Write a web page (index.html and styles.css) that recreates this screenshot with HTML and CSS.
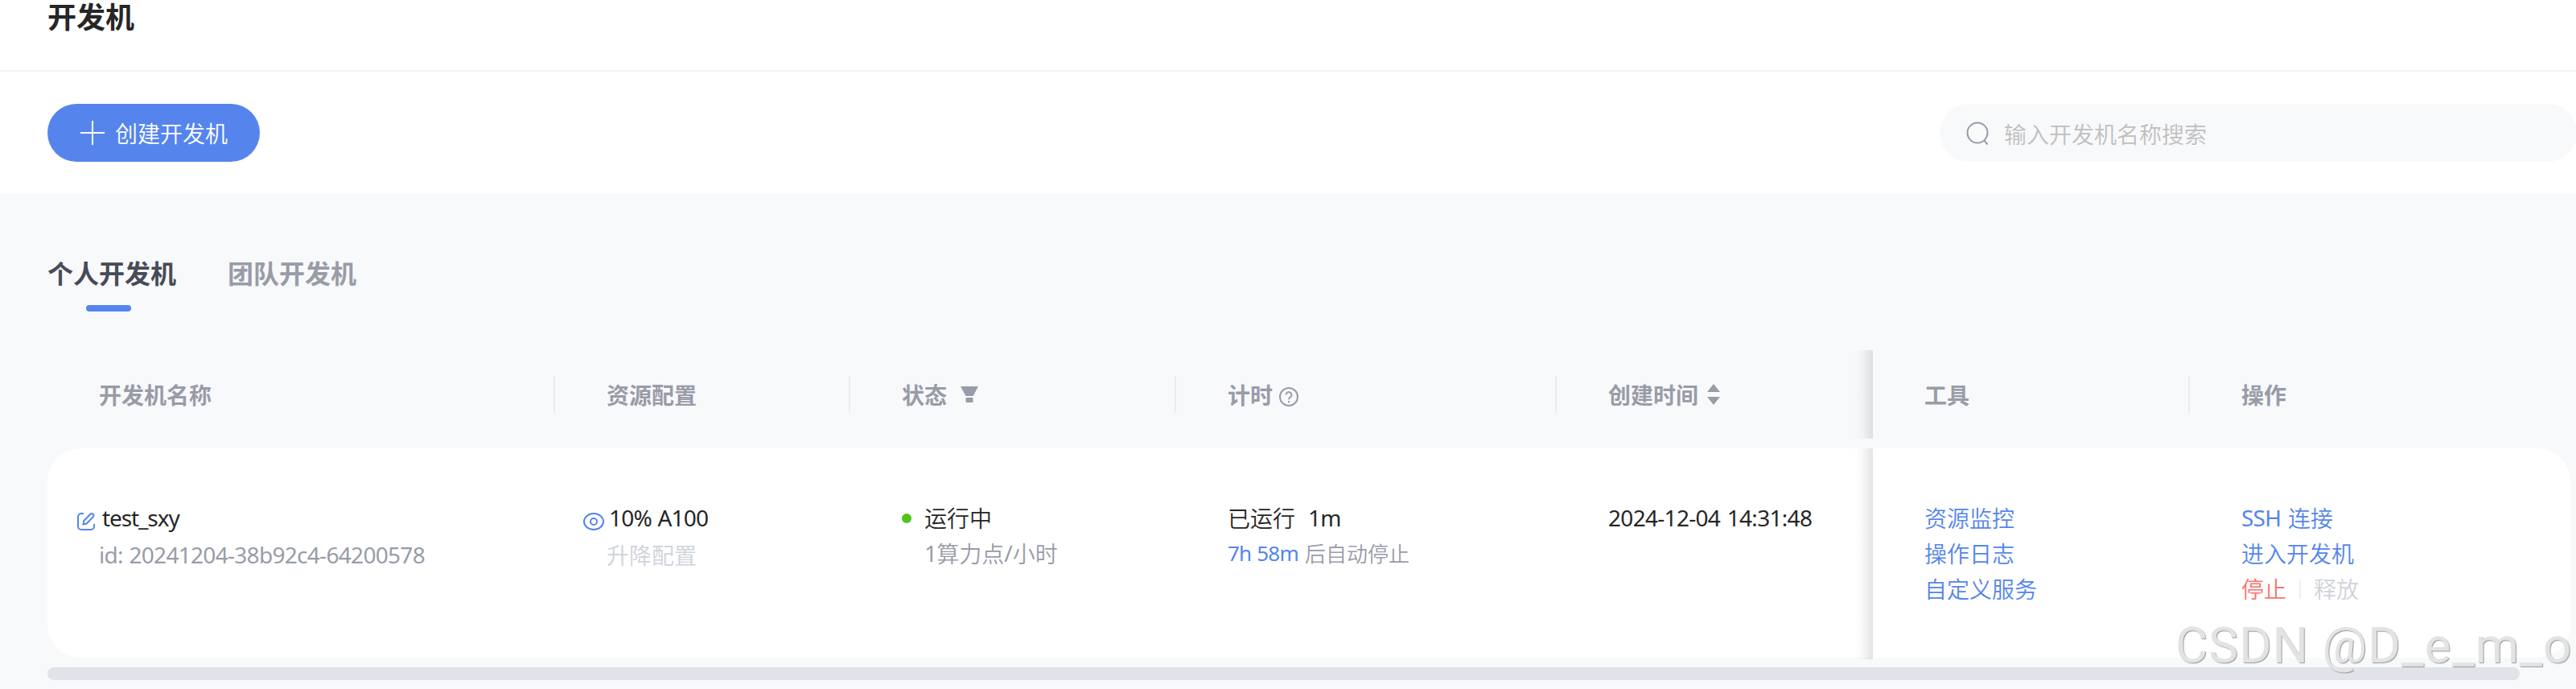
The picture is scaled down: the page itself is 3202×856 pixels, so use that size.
FILE: index.html
```html
<!DOCTYPE html>
<html lang="zh-CN">
<head>
<meta charset="utf-8">
<title>开发机</title>
<link rel="stylesheet" href="styles.css">
</head>
<body>
<header class="page-header"><h1>开发机</h1></header>
<section class="toolbar">
  <button class="create"><svg class="plus" viewBox="0 0 30 30"><path d="M15 0v30M0 15h30"/></svg>创建开发机</button>
  <div class="search">
    <svg class="search-icon" viewBox="0 0 28 30"><circle cx="14" cy="14" r="12.5"/><path d="M22 23l4.5 5.5"/></svg>
    <span class="placeholder">输入开发机名称搜索</span>
  </div>
</section>
<main class="content">
  <nav class="tabs"><a class="tab active">个人开发机</a><a class="tab">团队开发机</a></nav>
  <div class="grid head">
    <div class="th">开发机名称</div>
    <div class="th">资源配置</div>
    <div class="th">状态<svg class="filter" viewBox="0 0 22 20"><path d="M0 0h22l-6.500 12h-9zM6.500 14h9v6h-9z"/></svg></div>
    <div class="th">计时<svg class="help" viewBox="0 0 24 24"><circle cx="12" cy="12" r="11"/><path d="M8.500 9.600a3.500 3.500 0 1 1 5.300 3c-1.300.8-1.800 1.400-1.800 2.700"/><path d="M12 17v2.200"/></svg></div>
    <div class="th">创建时间<svg class="sort" viewBox="0 0 16 26"><path d="M8 0l8 10H0zM8 26l8-10H0z"/></svg></div>
    <div class="th fixed">工具</div>
    <div class="th">操作</div>
  </div>
  <div class="grid row">
    <div class="td">
      <div class="line name"><svg class="edit" viewBox="0 0 22 22"><path d="M8 1H5a4 4 0 0 0-4 4v12a4 4 0 0 0 4 4h12a4 4 0 0 0 4-4v-3"/><path d="M7.500 14.500l.8-4.500 8-8.200a2.300 2.300 0 0 1 3.400 0 2.300 2.300 0 0 1 0 3.300l-8 8.400z"/></svg><span class="latin host">test_sxy</span></div>
      <div class="line muted latin id">id: 20241204-38b92c4-64200578</div>
    </div>
    <div class="td">
      <div class="line spec"><svg class="eye" viewBox="0 0 26 22"><ellipse cx="13" cy="11" rx="12" ry="10"/><circle cx="13" cy="11" r="4"/></svg><span class="latin">10% A100</span></div>
      <div class="line faint lower">升降配置</div>
    </div>
    <div class="td">
      <div class="line status"><i class="dot"></i>运行中</div>
      <div class="line muted price"><span class="latin">1</span>算力点<span class="latin slash">/</span>小时</div>
    </div>
    <div class="td">
      <div class="line">已运行<span class="latin run">1m</span></div>
      <div class="line muted small"><span class="latin link left">7h 58m</span>后自动停止</div>
    </div>
    <div class="td"><div class="line latin date">2024-12-04 14:31:48</div></div>
    <div class="td fixed">
      <a class="line link">资源监控</a>
      <a class="line link">操作日志</a>
      <a class="line link">自定义服务</a>
    </div>
    <div class="td">
      <a class="line link"><span class="latin ssh">SSH</span>连接</a>
      <a class="line link">进入开发机</a>
      <div class="line"><a class="stop">停止</a><i class="sep"></i><a class="faint">释放</a></div>
    </div>
  </div>
  <div class="scrollbar"></div>
</main>
<div class="watermark">CSDN @D_e_m_o</div>
</body>
</html>
```
FILE: styles.css
```css
* { box-sizing: border-box; }
body {
  margin: 0;
  width: 3202px;
  height: 856px;
  overflow: hidden;
  position: relative;
  background: #fff;
  color: #262626;
  font: 350 28px/44px "Noto Sans CJK SC", sans-serif;
  white-space: nowrap;
}
svg { fill: none; stroke: currentColor; stroke-width: 2; flex: none; overflow: visible; }
.page-header { height: 89px; padding-left: 59px; border-bottom: 2px solid #f2f3f8; }
h1 { margin: 0; font-size: 36px; line-height: 38px; font-weight: 700; }
.toolbar { height: 152px; padding: 40px 0 0 59px; display: flex; justify-content: space-between; }
.create {
  width: 264px; height: 72px; padding: 0 0 0 41px; border: 0; border-radius: 36px;
  display: flex; align-items: center; gap: 13px;
  background: #5585ec; color: #fff; font: inherit;
}
.plus { width: 30px; height: 30px; }
.search {
  width: 792px; height: 72px; margin-right: -1px; padding-left: 33px; border-radius: 36px;
  display: flex; align-items: center; gap: 19px; flex: none;
  background: #f8f9fb; color: #bfbfbf;
}
.search-icon { width: 28px; height: 30px; margin-top: 2px; color: #989ca8; }
.placeholder { padding-top: 2px; }
.content { height: 615px; background: #f8f9fb; padding: 75px 0 0 59px; }
.tabs { display: flex; gap: 64px; height: 119px; }
.tab { font-size: 32px; font-weight: 700; color: #989ca8; display: flex; flex-direction: column; align-items: center; }
.tab.active { color: #474b58; }
.tab.active::after { content: ""; width: 56px; height: 8px; margin: 19px 0 0 -8px; border-radius: 4px; background: #5585ec; }
.grid { display: grid; width: 3136px; grid-template-columns: 631px 367px 405px 473px 393px 394px 473px; }
.head { height: 110px; margin-bottom: 12px; }
.th { display: flex; align-items: center; padding-left: 64px; position: relative; color: #989ca8; font-weight: 700; }
.th::after { content: ""; position: absolute; right: 0; top: 32px; width: 2px; height: 46px; background: #ebecef; }
.th:nth-child(5)::after, .th:last-child::after { display: none; }
.fixed { position: relative; }
.fixed::before {
  content: ""; position: absolute; right: 100%; top: 0; bottom: 0; width: 24px;
  background: linear-gradient(to right, rgba(0,0,0,0), rgba(0,0,0,.025) 45%, rgba(0,0,0,.11));
}
.td.fixed::before { bottom: -2px; }
.filter { width: 22px; height: 20px; margin: -1px 0 0 17px; fill: currentColor; stroke: none; }
.help { width: 24px; height: 24px; margin: 6px 0 0 8px; }
.sort { width: 16px; height: 26px; margin-left: 11px; fill: currentColor; stroke: none; }
.row { height: 260px; background: #fff; border-radius: 40px; }
.td { padding: 64px 0 0 64px; }
.line { display: flex; align-items: center; height: 44px; }
.latin { font-family: "Noto Sans", sans-serif; font-weight: 400; letter-spacing: -.8px; word-spacing: 1px; }
.muted { color: #989ca8; }
.faint { color: #cfd2da; }
.link { color: #5585ec; }
.lower { padding-top: 4px; }
.name { margin-left: -27px; }
.edit { width: 22px; height: 22px; margin-top: 10px; color: #5585ec; }
.host { margin-left: 9px; letter-spacing: -1.1px; }
.id { padding-top: 4px; letter-spacing: -.7px; word-spacing: 1px; }
.spec { margin-left: -29px; }
.eye { width: 26px; height: 22px; margin: 10px 6px 0 0; color: #5585ec; }
.dot { width: 12px; height: 12px; border-radius: 50%; background: #52c41a; margin: 2px 16px 0 0; }
.price { padding-left: 28px; }
.slash { margin-right: 1px; }
.run { margin-left: 16px; }
.date { letter-spacing: -.7px; word-spacing: 2px; }
.small { font-size: 26px; }
.left { margin-right: 8px; }
.ssh { margin-right: 9px; }
.stop { color: #f8736c; }
.sep { width: 2px; height: 24px; margin: 2px 16px 0; background: #eeeff2; }
.scrollbar { width: 3073px; height: 16px; margin-top: 12px; border-radius: 8px; background: #e0e3e8; }
.watermark {
  position: absolute; left: 2704px; top: 766px;
  font: 62px/72px Roboto, sans-serif; letter-spacing: 1px;
  color: #e3e3e3; text-shadow: 1px 1px 1px #999;
}
```
